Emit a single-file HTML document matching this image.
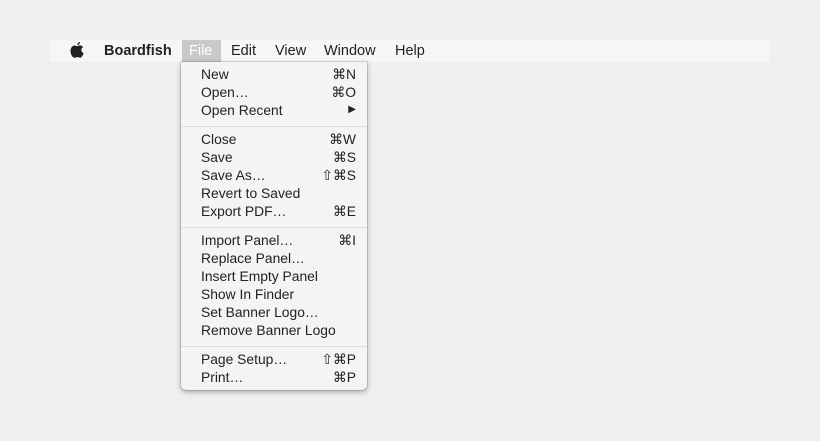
<!DOCTYPE html>
<html><head><style>
body{margin:0;width:820px;height:441px;background:#efefef;font-family:"Liberation Sans",sans-serif;position:relative;overflow:hidden;color:#222}
.bar{position:absolute;left:50px;top:40px;width:720px;height:22px;background:#f6f6f6}
.mi{position:absolute;top:40px;height:22px;line-height:22px;font-size:14.5px}
.hl{position:absolute;left:182px;top:40px;width:39px;height:22px;background:#c9c9c9}
.menu{position:absolute;left:181px;top:62px;width:186px;height:328px;background:#f4f4f4;border-radius:0 0 5px 5px;box-shadow:0 2px 6px rgba(0,0,0,.3),0 0 0 1px rgba(0,0,0,.12)}
.r{position:absolute;left:20px;width:155px;height:18px;line-height:18px;font-size:13.85px}
.r span{position:absolute;right:0;top:0}
.s{position:absolute;left:0;width:186px;height:1px;background:#dcdcdc}
</style></head><body>
<div class="bar"></div>
<div class="hl"></div>
<svg style="position:absolute;left:70px;top:42px" width="14" height="17" viewBox="0 0 14 17"><path d="M10 0c0 1.6-1.2 3-2.7 3C7.2 1.5 8.5.2 10 0zM7 4.2c.8 0 1.8-.8 3-.8 1.1 0 2.4.6 3.1 1.7-2.6 1.5-2.2 5 .6 6-.7 2-2.1 4.6-3.5 4.6-1 0-1.4-.6-2.7-.6-1.4 0-1.8.7-2.8.7C2.5 15.8.5 12.3.5 9.1.5 5.8 2.6 3.5 4.5 3.5c1.1 0 1.8.7 2.5.7z" fill="#222"/></svg>
<div class="mi" style="left:104px;font-weight:bold">Boardfish</div>
<div class="mi" style="left:189px;color:#fff">File</div>
<div class="mi" style="left:231px">Edit</div>
<div class="mi" style="left:275px">View</div>
<div class="mi" style="left:324px">Window</div>
<div class="mi" style="left:395px">Help</div>
<div class="menu">
<div class="r" style="top:3px">New<span>⌘N</span></div>
<div class="r" style="top:21px">Open…<span>⌘O</span></div>
<div class="r" style="top:39px">Open Recent<span style="font-size:10px">▶</span></div>
<div class="s" style="top:64px"></div>
<div class="r" style="top:68px">Close<span>⌘W</span></div>
<div class="r" style="top:86px">Save<span>⌘S</span></div>
<div class="r" style="top:104px">Save As…<span>⇧⌘S</span></div>
<div class="r" style="top:122px">Revert to Saved</div>
<div class="r" style="top:140px">Export PDF…<span>⌘E</span></div>
<div class="s" style="top:165px"></div>
<div class="r" style="top:169px">Import Panel…<span>⌘I</span></div>
<div class="r" style="top:187px">Replace Panel…</div>
<div class="r" style="top:205px">Insert Empty Panel</div>
<div class="r" style="top:223px">Show In Finder</div>
<div class="r" style="top:241px">Set Banner Logo…</div>
<div class="r" style="top:259px">Remove Banner Logo</div>
<div class="s" style="top:284px"></div>
<div class="r" style="top:288px">Page Setup…<span>⇧⌘P</span></div>
<div class="r" style="top:306px">Print…<span>⌘P</span></div>
</div>
</body></html>
